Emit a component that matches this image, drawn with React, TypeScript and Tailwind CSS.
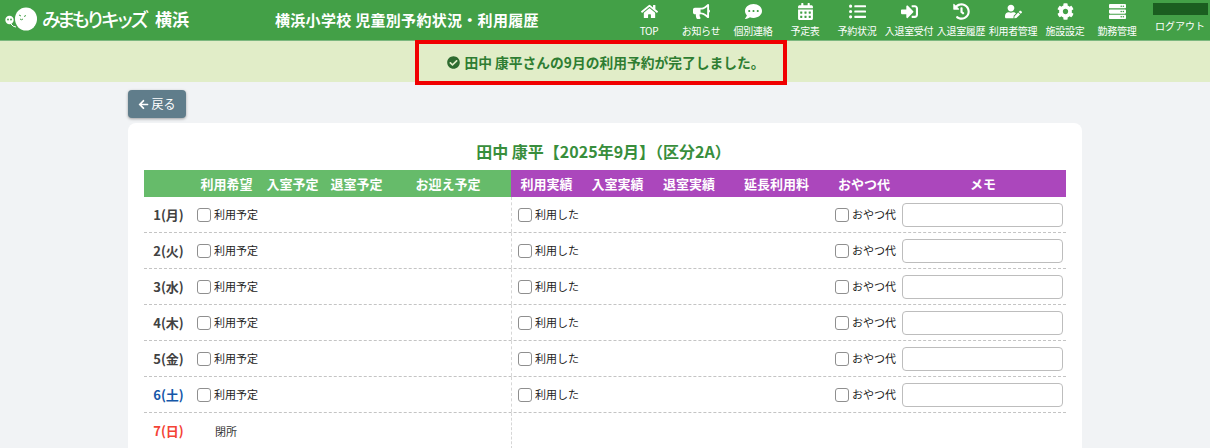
import { FaHome, FaBullhorn, FaCommentDots, FaCalendarAlt, FaListUl, FaSignInAlt, FaHistory, FaUserEdit, FaCog, FaServer, FaArrowLeft, FaCheckCircle } from "react-icons/fa";

const font = { fontFamily: '"Noto Sans CJK JP", "Noto Sans", sans-serif' };

const nav = [
  { label: "TOP", Icon: FaHome },
  { label: "お知らせ", Icon: FaBullhorn },
  { label: "個別連絡", Icon: FaCommentDots },
  { label: "予定表", Icon: FaCalendarAlt },
  { label: "予約状況", Icon: FaListUl },
  { label: "入退室受付", Icon: FaSignInAlt },
  { label: "入退室履歴", Icon: FaHistory },
  { label: "利用者管理", Icon: FaUserEdit },
  { label: "施設設定", Icon: FaCog },
  { label: "勤務管理", Icon: FaServer },
];

const leftHead = ["利用希望", "入室予定", "退室予定", "お迎え予定"];
const rightHead = ["利用実績", "入室実績", "退室実績", "延長利用料", "おやつ代", "メモ"];

const days = [
  { d: "1(月)", c: "text-[#424242]" },
  { d: "2(火)", c: "text-[#424242]" },
  { d: "3(水)", c: "text-[#424242]" },
  { d: "4(木)", c: "text-[#424242]" },
  { d: "5(金)", c: "text-[#424242]" },
  { d: "6(土)", c: "text-[#1557a8]" },
];

const gridCols = "grid grid-cols-[52px_65px_64px_62px_124px_71px_71px_72px_103px_72px_166px]";

function Check({ label }: { label: string }) {
  return (
    <span className="flex items-center gap-[3px] text-[11px] text-[#222]">
      <span className="w-[14px] h-[14px] rounded-[3px] border border-[#8f8f8f] bg-white shrink-0" />
      {label}
    </span>
  );
}

function Logo() {
  return (
    <div className="flex items-center pl-[5px] gap-[4px] -mt-[3px]">
      <svg width="33" height="24" viewBox="0 0 33 24">
        <circle cx="4.5" cy="13" r="4.2" fill="#fff" />
        <circle cx="3" cy="12.5" r="0.9" fill="#43a047" />
        <circle cx="6" cy="12.5" r="0.9" fill="#43a047" />
        <path d="M6 17 q2 3 5 3" stroke="#fff" strokeWidth="1" fill="none" />
        <ellipse cx="21" cy="12" rx="11" ry="11.5" fill="#fff" />
        <path d="M14 8 l2 1 M19 9.5 l2 -1" stroke="#43a047" strokeWidth="1" />
        <path d="M15 12 q1.5 1.5 3 0" stroke="#43a047" strokeWidth="1" fill="none" />
      </svg>
      <span className="text-white text-[19px] leading-none tracking-[-4.3px] whitespace-nowrap font-medium">みまもりキッズ</span>
      <span className="text-white text-[17px] leading-none font-bold whitespace-nowrap ml-[6px]">横浜</span>
    </div>
  );
}

export default function App() {
  return (
    <div style={font} className="w-[1210px] h-[448px] overflow-hidden bg-[#f1f3f5]">
      <header className="h-[40px] bg-[#43a047] flex items-center relative">
        <div className="w-[275px] shrink-0"><Logo /></div>
        <h1 className="text-white font-bold text-[15px] tracking-[0.3px] whitespace-nowrap w-[348px]">横浜小学校 児童別予約状況・利用履歴</h1>
        <nav className="flex w-[520px] h-full shrink-0">
          {nav.map(({ label, Icon }) => (
            <div key={label} className="w-[52px] flex flex-col items-center pt-[3px] text-white">
              <Icon className="w-[17px] h-[17px]" />
              <span className="text-[10px] leading-none mt-[6px] whitespace-nowrap tracking-[-0.3px]">{label}</span>
            </div>
          ))}
        </nav>
        <div className="flex flex-col items-center ml-[9px] w-[56px] pt-[3px] h-full">
          <div className="w-[55px] h-[12px] bg-[#1b5e20]" />
          <span className="text-white text-[10px] leading-none mt-[6px] whitespace-nowrap">ログアウト</span>
        </div>
      </header>

      <div className="h-[42px] bg-[#e1edc8] border-t border-[#7cb87f] flex justify-center relative">
        <div className="w-[372px] h-[45px] -mt-[1px] border-[4px] border-[#f00000] flex items-center justify-center gap-[5px] pl-[10px] text-[#2e7d32] text-[13.75px] font-bold relative z-10 ml-[-9px]">
          <FaCheckCircle className="w-[13px] h-[13px] text-[#2e6b30]" />
          <span>田中 康平さんの9月の利用予約が完了しました。</span>
        </div>
      </div>

      <div className="pt-[8px] pl-[128px]">
        <button className="w-[58px] h-[28px] rounded-[4px] bg-[#607d8b] text-white text-[12px] flex items-center justify-center gap-[2px] shadow-[0_1px_3px_rgba(0,0,0,0.35)]">
          <FaArrowLeft className="w-[11px] h-[11px]" />
          戻る
        </button>
        <section className="mt-[5px] w-[954px] h-[400px] bg-white rounded-[8px] px-[16px] pt-[17px]">
          <h2 className="text-center text-[#388e3c] font-bold text-[16px] leading-[22px] h-[30px] pr-[3px]">田中 康平【2025年9月】（区分2A）</h2>
          <div className={`${gridCols} h-[27px] text-white text-[13px] font-bold items-center text-center`}>
            <div className="col-span-5 h-full bg-[#66bb6a] grid grid-cols-[52px_61px_71px_57px_126px] items-center">
              <span />
              {leftHead.map((h) => <span key={h} className="whitespace-nowrap">{h}</span>)}
            </div>
            <div className="col-span-6 h-full bg-[#ab47bc] grid grid-cols-[71px_71px_72px_103px_72px_166px] items-center">
              {rightHead.map((h) => <span key={h} className="whitespace-nowrap">{h}</span>)}
            </div>
          </div>
          {days.map(({ d, c }) => (
            <div key={d} className={`${gridCols} h-[36px] border-b border-dashed border-[#c4c4c4] items-center`}>
              <span className={`font-bold text-[13px] text-center pr-[3px] ${c}`}>{d}</span>
              <div className="col-span-4 pl-[1px]"><Check label="利用予定" /></div>
              <div className="col-span-4 h-full flex items-center border-l border-dashed border-[#d6d6d6] pl-[6px]"><Check label="利用した" /></div>
              <div className="pl-[7px]"><Check label="おやつ代" /></div>
              <div className="pl-[2px] pr-[3px]">
                <input aria-label="メモ" className="block w-full h-[24px] rounded-[4px] border border-[#bdbdbd] bg-white" />
              </div>
            </div>
          ))}
          <div className={`${gridCols} h-[36px] items-center`}>
            <span className="font-bold text-[13px] text-center pr-[3px] text-[#f44336]">7(日)</span>
            <div className="col-span-4 pl-[19px] text-[11px] text-[#333]">閉所</div>
            <div className="col-span-6 h-full border-l border-dashed border-[#d6d6d6]" />
          </div>
        </section>
      </div>
    </div>
  );
}
